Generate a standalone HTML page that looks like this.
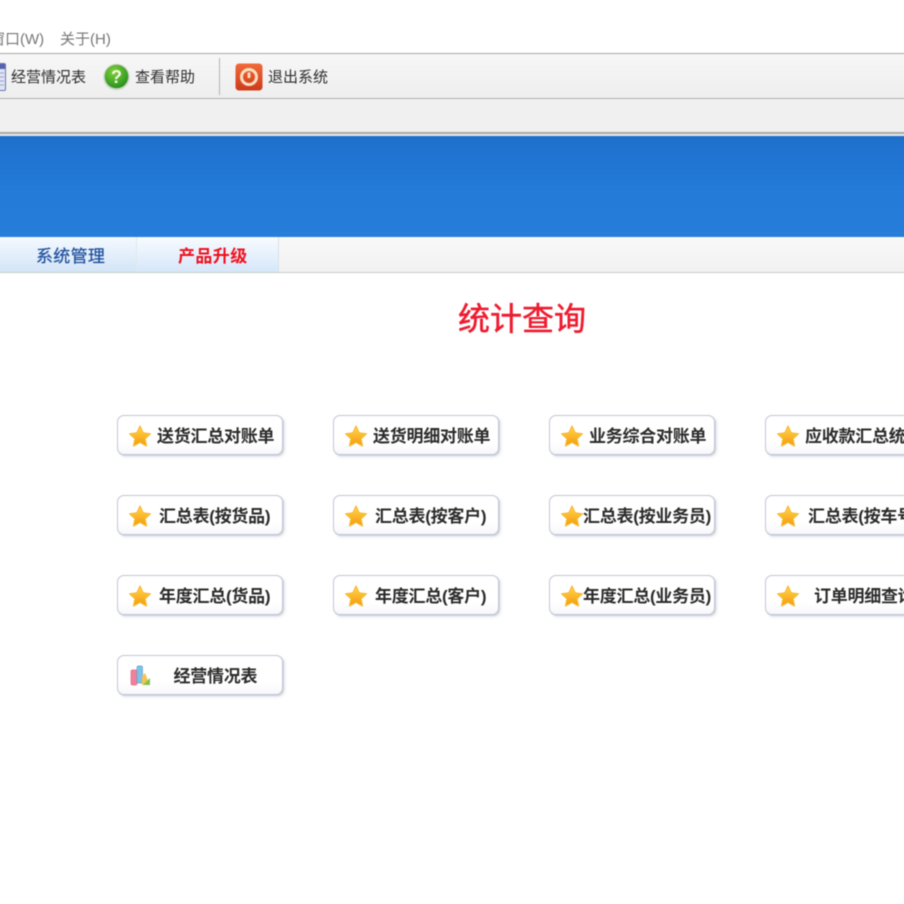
<!DOCTYPE html>
<html lang="zh">
<head>
<meta charset="utf-8">
<style>
html,body{margin:0;padding:0;background:#fff;width:904px;height:904px;overflow:hidden}
body{position:relative;font-family:"Liberation Sans","Noto Sans CJK SC",sans-serif;color:#222}
#w{position:absolute;left:0;top:0;width:904px;height:904px;filter:blur(.4px)}
.a{position:absolute;white-space:nowrap}
.t{font-size:15px;line-height:20px;color:#2e2e2e;top:68px}
.b{position:absolute;width:164px;height:38px;border:1px solid #c2c6d6;border-radius:7px;background:linear-gradient(#fff 70%,#f7f8fb);box-shadow:1px 1px 1px #ccd0da,2px 2px 3px #e8e9ee}
.b svg{position:absolute;left:10px;top:7.500px}
.b span{position:absolute;top:10px;font-size:17px;line-height:22px;font-weight:700;color:#2b2b2b;white-space:nowrap;letter-spacing:-.25px}
</style>
</head>
<body>
<div id="w">
<svg width="0" height="0" style="position:absolute"><defs>
<linearGradient id="g" x1="0" y1="0" x2="0" y2="1"><stop offset="0" stop-color="#ffdc4e"/><stop offset="1" stop-color="#f7960a"/></linearGradient>
<symbol id="s" viewBox="0 0 24 24"><path d="M12 2l3 6.800 7.400 1-5.400 4.900 1.500 7.300L12 18.400 5.500 22 7 14.700 1.600 9.800l7.400-1z" fill="url(#g)" stroke="#f6b92c" stroke-width="1.200" stroke-linejoin="round"/></symbol>
</defs></svg>

<div class="a" style="left:-10px;top:30px;font-size:15px;line-height:20px;color:#777">窗口(W)</div>
<div class="a" style="left:60px;top:30px;font-size:15px;line-height:20px;color:#777">关于(H)</div>

<div class="a" style="left:-10px;top:53px;width:924px;height:44px;background:linear-gradient(#f7f7f7,#eeeeee);border-top:1px solid #a9a9a9;border-bottom:1px solid #b0b0b0"></div>
<div class="a" style="left:-10px;top:99px;width:924px;height:33px;background:#f0f0f0;border-bottom:2px solid #a8a8a8"></div>
<div class="a" style="left:-10px;top:134px;width:924px;height:2px;background:#e9e9e9"></div>

<svg class="a" style="left:-4px;top:63px" width="10" height="28" viewBox="0 0 10 28"><rect x=".5" y=".5" width="9" height="27" rx="1.500" fill="#dfe4f4" stroke="#6a74b4"/><rect x="1" y="1" width="8" height="5" fill="#5763ad"/><path d="M2 10h6M2 14h6M2 18h6M2 22h6" stroke="#9aa3cf"/></svg>
<div class="a t" style="left:11px">经营情况表</div>

<svg class="a" style="left:103px;top:63px" width="27" height="28" viewBox="0 0 27 28">
<defs><radialGradient id="gr" cx=".4" cy=".3" r=".8"><stop offset="0" stop-color="#80d238"/><stop offset="1" stop-color="#1c881e"/></radialGradient></defs>
<circle cx="13.500" cy="14" r="13.300" fill="#d0d6cc"/><circle cx="13.500" cy="13.500" r="11.800" fill="url(#gr)"/>
<text x="13.500" y="20" text-anchor="middle" font-family="Liberation Sans" font-size="18" font-weight="700" fill="#f4f7e6">?</text></svg>
<div class="a t" style="left:135px">查看帮助</div>

<div class="a" style="left:219px;top:58px;width:1px;height:37px;background:#b4b4b4"></div>

<svg class="a" style="left:235px;top:63px" width="28" height="28" viewBox="0 0 28 28">
<defs><linearGradient id="gp" x1="0" y1="0" x2="0" y2="1"><stop offset="0" stop-color="#f26a3a"/><stop offset="1" stop-color="#cd3a1c"/></linearGradient></defs>
<rect x=".5" y=".5" width="27" height="27" rx="3.500" fill="url(#gp)"/>
<circle cx="14" cy="14" r="7.500" fill="none" stroke="#fbe0c0" stroke-width="3"/><path d="M14 9.500v5.500" stroke="#fbe0c0" stroke-width="2.800"/></svg>
<div class="a t" style="left:268px">退出系统</div>

<div class="a" style="left:-10px;top:136px;width:924px;height:101px;background:linear-gradient(#1f70cd,#247bd8 55%,#267dda)"></div>
<div class="a" style="left:-10px;top:237px;width:924px;height:35px;background:linear-gradient(#f8f8f8,#f2f2f2);border-bottom:1px solid #c9cdc6"></div>
<div class="a" style="left:-10px;top:237px;width:146px;height:35px;background:linear-gradient(#f4f9fe,#d3e5f7);border-right:1px solid #dfe8f0"></div>
<div class="a" style="left:137px;top:237px;width:141px;height:35px;background:linear-gradient(#f8fbff,#d6e7fa);border-right:1px solid #d8e0e8"></div>
<div class="a" style="left:36px;top:246px;font-size:17px;line-height:22px;color:#1f4f9e;letter-spacing:.3px;-webkit-text-stroke:.25px #1f4f9e">系统管理</div>
<div class="a" style="left:178px;top:246px;font-size:17px;line-height:22px;color:#f0101c;font-weight:700;letter-spacing:.4px">产品升级</div>

<div class="a" style="left:458px;top:298px;font-size:32px;line-height:42px;color:#ee1c30;-webkit-text-stroke:.5px #ee1c30">统计查询</div>

<div class="b" style="left:117px;top:415px"><svg width="24" height="24"><use href="#s"/></svg><span style="left:39px">送货汇总对账单</span></div>
<div class="b" style="left:333px;top:415px"><svg width="24" height="24"><use href="#s"/></svg><span style="left:39px">送货明细对账单</span></div>
<div class="b" style="left:549px;top:415px"><svg width="24" height="24"><use href="#s"/></svg><span style="left:39px">业务综合对账单</span></div>
<div class="b" style="left:765px;top:415px"><svg width="24" height="24"><use href="#s"/></svg><span style="left:39px">应收款汇总统计</span></div>

<div class="b" style="left:117px;top:495px"><svg width="24" height="24"><use href="#s"/></svg><span style="left:41px">汇总表(按货品)</span></div>
<div class="b" style="left:333px;top:495px"><svg width="24" height="24"><use href="#s"/></svg><span style="left:41px">汇总表(按客户)</span></div>
<div class="b" style="left:549px;top:495px"><svg width="24" height="24"><use href="#s"/></svg><span style="left:33px">汇总表(按业务员)</span></div>
<div class="b" style="left:765px;top:495px"><svg width="24" height="24"><use href="#s"/></svg><span style="left:42px">汇总表(按车号)</span></div>

<div class="b" style="left:117px;top:575px"><svg width="24" height="24"><use href="#s"/></svg><span style="left:41px">年度汇总(货品)</span></div>
<div class="b" style="left:333px;top:575px"><svg width="24" height="24"><use href="#s"/></svg><span style="left:41px">年度汇总(客户)</span></div>
<div class="b" style="left:549px;top:575px"><svg width="24" height="24"><use href="#s"/></svg><span style="left:33px">年度汇总(业务员)</span></div>
<div class="b" style="left:765px;top:575px"><svg width="24" height="24"><use href="#s"/></svg><span style="left:48px">订单明细查询</span></div>

<div class="b" style="left:117px;top:655px">
<svg width="22" height="22" viewBox="0 0 22 22" style="left:11px;top:9px"><rect x="2" y="5" width="6" height="15" rx="1.500" fill="#f0809a" stroke="#dc6a86" stroke-width=".7"/><rect x="8" y="1" width="5.500" height="17" rx="1.500" fill="#7cc2ea" stroke="#5ba3d2" stroke-width=".7"/><path d="M13 20V11l3 -3 2 5 3 7z" fill="#f3c54f"/><path d="M14 20l7-7v7z" fill="#7fc24f"/></svg>
<span style="left:55.500px">经营情况表</span></div>
</div>
</body>
</html>
